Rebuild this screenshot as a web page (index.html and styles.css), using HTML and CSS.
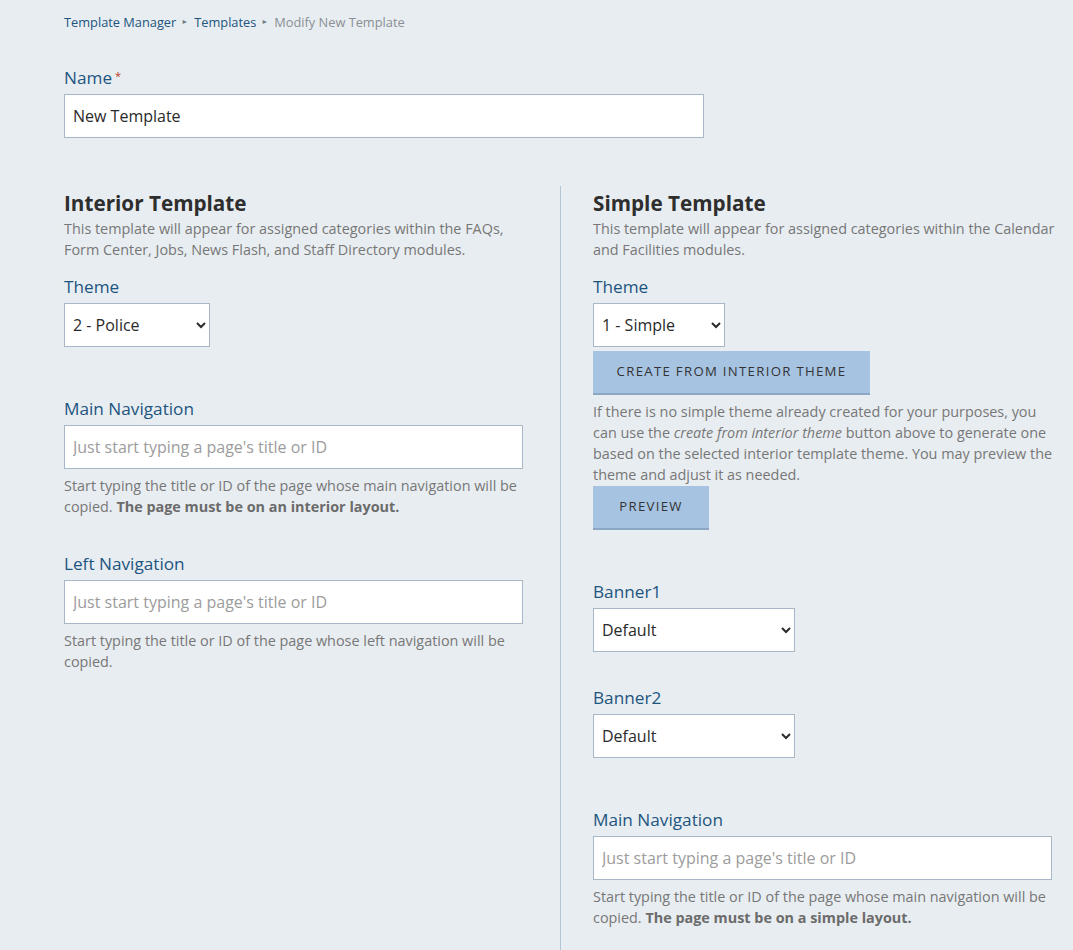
FILE: index.html
```html
<!DOCTYPE html>
<html lang="en">
<head>
<meta charset="utf-8">
<title>Modify New Template</title>
<link rel="stylesheet" href="styles.css">
</head>
<body>
<div class="page">
  <nav class="breadcrumb">
    <a href="#">Template Manager</a><span class="sep">&#9658;</span>
    <a href="#">Templates</a><span class="sep">&#9658;</span>
    <span class="current">Modify New Template</span>
  </nav>

  <div class="field name-field">
    <label class="label">Name<span class="req">*</span></label>
    <input class="text-input name-input" type="text" value="New Template">
  </div>

  <div class="columns">
    <section class="col col-left">
      <h2 class="col-title">Interior Template</h2>
      <p class="desc">This template will appear for assigned categories within the FAQs, Form Center, Jobs, News Flash, and Staff Directory modules.</p>

      <div class="field">
        <label class="label">Theme</label>
        <select class="select sel-police"><option>2 - Police</option></select>
      </div>

      <div class="field nav-field">
        <label class="label">Main Navigation</label>
        <input class="text-input nav-input" type="text" placeholder="Just start typing a page's title or ID">
        <p class="help">Start typing the title or ID of the page whose main navigation will be copied. <strong>The page must be on an interior layout.</strong></p>
      </div>

      <div class="field nav-field">
        <label class="label">Left Navigation</label>
        <input class="text-input nav-input" type="text" placeholder="Just start typing a page's title or ID">
        <p class="help">Start typing the title or ID of the page whose left navigation will be copied.</p>
      </div>
    </section>

    <div class="divider"></div>

    <section class="col col-right">
      <h2 class="col-title">Simple Template</h2>
      <p class="desc">This template will appear for assigned categories within the Calendar and Facilities modules.</p>

      <div class="field">
        <label class="label">Theme</label>
        <select class="select sel-simple"><option>1 - Simple</option></select>
        <button class="btn btn-create" type="button">Create from Interior Theme</button>
        <p class="help help-tight">If there is no simple theme already created for your purposes, you can use the <em>create from interior theme</em> button above to generate one based on the selected interior template theme. You may preview the theme and adjust it as needed.</p>
        <button class="btn btn-preview" type="button">Preview</button>
      </div>

      <div class="field banner-field first-banner">
        <label class="label">Banner1</label>
        <select class="select sel-banner"><option>Default</option></select>
      </div>

      <div class="field banner-field">
        <label class="label">Banner2</label>
        <select class="select sel-banner"><option>Default</option></select>
      </div>

      <div class="field nav-field last-nav">
        <label class="label">Main Navigation</label>
        <input class="text-input nav-input" type="text" placeholder="Just start typing a page's title or ID">
        <p class="help">Start typing the title or ID of the page whose main navigation will be copied. <strong>The page must be on a simple layout.</strong></p>
      </div>
    </section>
  </div>
</div>
</body>
</html>
```

FILE: styles.css
```css
* { box-sizing: border-box; }

html, body {
  margin: 0;
  padding: 0;
  background: #e8edf1;
  height: 100%;
  overflow: hidden;
}

body {
  font-family: "Open Sans", "Noto Sans", sans-serif;
  color: #333;
}

.page {
  padding: 11px 0 0 64px;
}

.breadcrumb {
  font-size: 12.8px;
  line-height: 20px;
  display: flex;
  align-items: center;
}
.breadcrumb a {
  color: #22557e;
  text-decoration: none;
}
.breadcrumb .sep {
  font-size: 7px;
  color: #6f7c88;
  margin: 1px 6px 0 5px;
}
.breadcrumb .current {
  color: #8a8f94;
}

.field {
  display: flex;
  flex-direction: column;
  align-items: flex-start;
}

.label {
  font-size: 17.2px;
  line-height: 22px;
  color: #1d5580;
  margin-bottom: 5px;
}
.req {
  color: #c0392b;
  font-size: 11px;
  vertical-align: top;
  margin-left: 3px;
  line-height: 14px;
  position: relative;
  top: 2px;
}

.name-field {
  margin-top: 35px;
}

.text-input {
  height: 44px;
  border: 1px solid #a8b7c7;
  background: #fff;
  font-family: inherit;
  font-size: 16px;
  padding: 0 8px;
  color: #2a2a2a;
  outline: none;
}
.text-input::placeholder {
  color: #9c9c9c;
}
.name-input { width: 640px; }
.nav-input { width: 459px; }

.columns {
  display: grid;
  grid-template-columns: 466px 1px 466px;
  column-gap: 30px;
  margin-top: 48px;
}
.col-right { margin-left: 2px; }

.divider {
  background: #b3c6d8;
  width: 1px;
  height: 800px;
}

.col-title {
  font-size: 20.7px;
  font-weight: 700;
  line-height: 30px;
  margin: 2px 0 0;
  color: #2e2e2e;
}

.desc, .help {
  font-size: 14.4px;
  line-height: 21px;
  color: #777;
  margin: 0;
}
.desc { margin-bottom: 16px; }
.help { margin-top: 6px; }
.help strong { font-weight: 700; color: #6b6b6b; }

.select {
  height: 44px;
  border: 1px solid #a8b7c7;
  background: #fff;
  font-family: inherit;
  font-size: 16px;
  color: #2a2a2a;
  padding: 0 4px;
  border-radius: 0;
}
.sel-police { width: 146px; }
.sel-simple { width: 132px; }
.sel-banner { width: 202px; }

.nav-field { margin-top: 51px; }
.nav-field + .nav-field { margin-top: 36px; }

.btn {
  height: 44px;
  border: none;
  border-bottom: 2px solid #8ba7c4;
  background: #a6c4e2;
  color: #333;
  font-family: inherit;
  font-size: 13.2px;
  letter-spacing: 1.3px;
  text-transform: uppercase;
  white-space: nowrap;
  padding: 0 0 2px;
  text-align: center;
  cursor: pointer;
}
.btn-create { margin-top: 4px; width: 277px; }
.help-tight { margin-top: 6px; margin-bottom: 1px; }
.btn-preview { margin-top: 0; width: 116px; }

.first-banner { margin-top: 51px; }
.banner-field + .banner-field { margin-top: 35px; }
.last-nav { margin-top: 51px; }
```
